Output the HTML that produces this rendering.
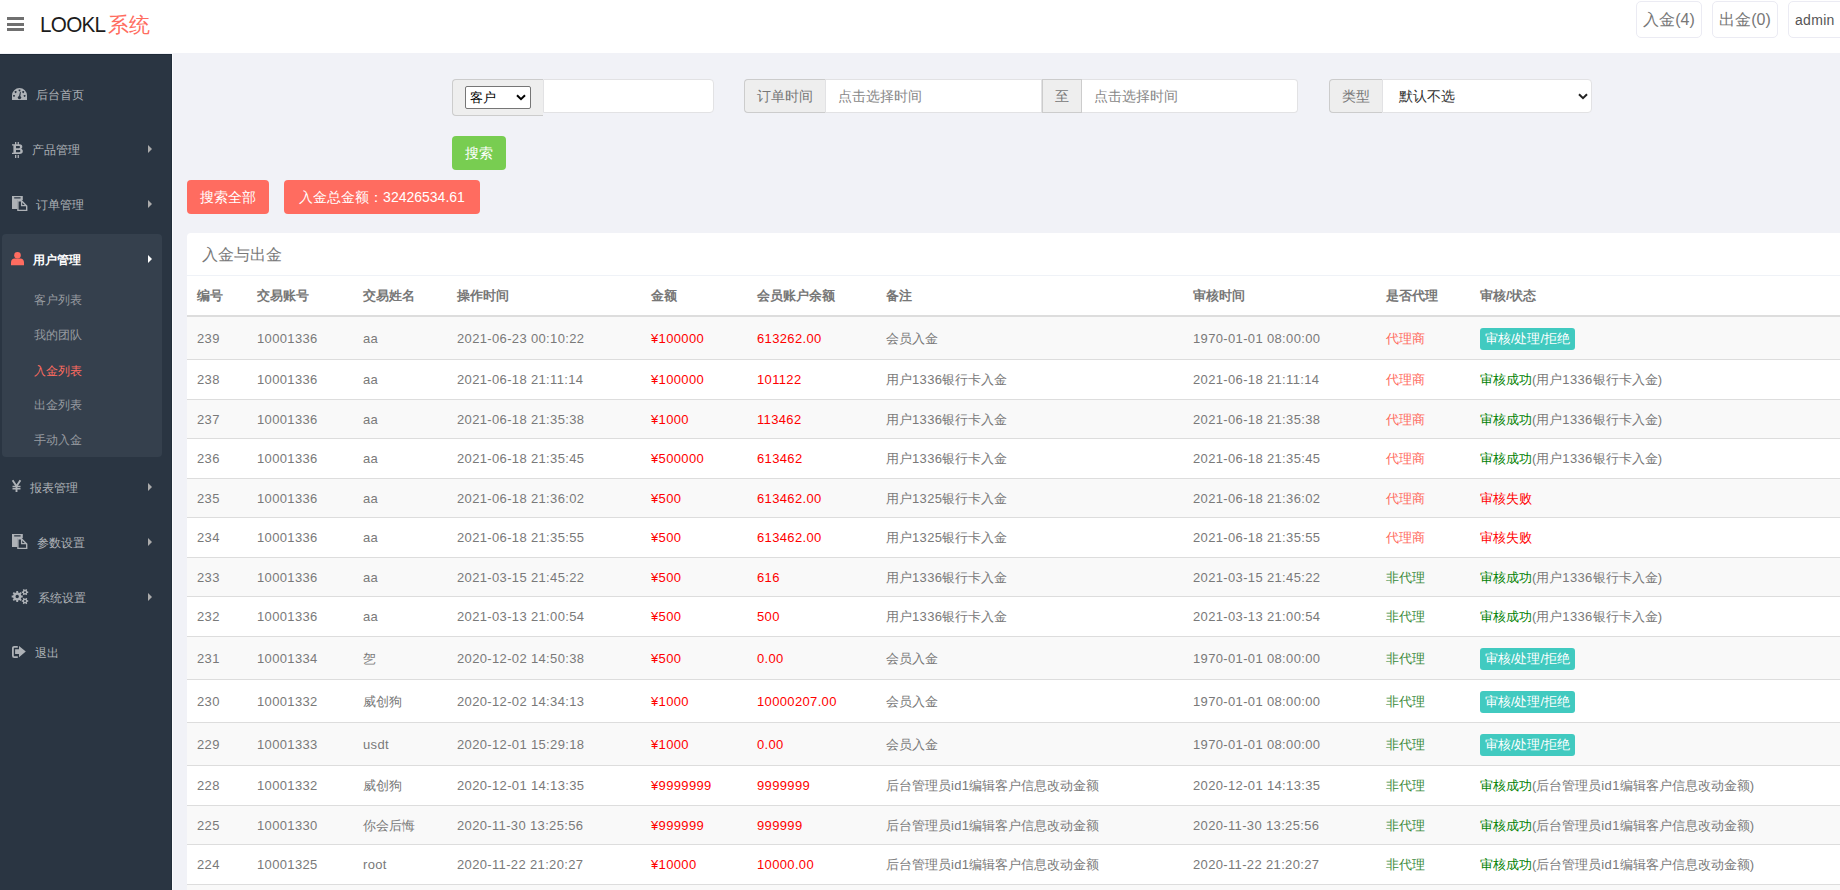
<!DOCTYPE html>
<html><head><meta charset="utf-8"><title>LOOKL</title>
<style>
*{box-sizing:border-box}
html,body{margin:0;padding:0}
body{width:1840px;height:890px;overflow:hidden;position:relative;background:#f1f2f7;font-family:"Liberation Sans",sans-serif;color:#797979;font-size:13px}
.hdr{position:absolute;left:0;top:0;width:1840px;height:53px;background:#fff}
.burger{position:absolute;left:7px;top:17px;width:17px;height:14px}
.burger i{position:absolute;left:0;width:17px;height:3px;background:#707070}
.logo{position:absolute;left:40px;top:9.5px;font-size:22.5px;line-height:30px;color:#1c1c1c;white-space:nowrap}
.logo span{color:#ff6c60;letter-spacing:0;font-size:21px;white-space:nowrap}
.hbox{position:absolute;top:1px;height:37px;border:1px solid #ebebf3;border-radius:5px;background:#fff;color:#777;font-size:16px;line-height:35px;text-align:center}
.side{position:absolute;left:0;top:54px;width:172px;height:836px;background:#2a3542;border-top:1px solid #1f2a37;border-right:1px solid #222d3a}
.sline{position:absolute;left:172px;top:53px;width:1px;height:837px;background:#fafbfd}
.mi{position:absolute;left:0;width:172px;height:20px;color:#aeb2b7;font-size:12px;line-height:20px}
.mi .ic{position:absolute;top:3px}
.mi .tx{position:absolute;top:0}
.mi .car{position:absolute;left:148px;top:5px;width:0;height:0;border-top:4px solid transparent;border-bottom:4px solid transparent;border-left:4px solid #ababab}
.subblk{position:absolute;left:2px;top:234px;width:160px;height:223px;background:#35404d;border-radius:4px}
.si{position:absolute;left:34px;font-size:12px;line-height:20px;color:#979ba0}

.ig{position:absolute;top:79px;height:34px}
.addon{position:absolute;top:0;height:34px;background:#eee;border:1px solid #ccc;color:#777;font-size:14px;line-height:32px;text-align:center}
.inp{position:absolute;top:0;height:34px;background:#fff;border:1px solid #e2e2e4;border-radius:0 4px 4px 0;color:#888;font-size:14px;line-height:32px;padding-left:12px}
.btn{position:absolute;height:34px;border-radius:4px;color:#fff;font-size:14px;line-height:34px;text-align:center}
.panel{position:absolute;left:187px;top:233px;width:1660px;height:700px;background:#fff;border-radius:4px}
.ph{position:absolute;left:0;top:0;width:100%;height:43px;border-bottom:1px solid #eff2f7}
.ph span{position:absolute;left:15px;top:11px;font-size:16px;line-height:22px;color:#797979}
table.t{position:absolute;left:0;top:43px;border-collapse:separate;border-spacing:0;table-layout:fixed;width:1660px;font-size:13px;color:#797979}
.t i{font-style:normal;letter-spacing:.35px}
.t th{height:41px;text-align:left;font-weight:bold;font-size:13px;letter-spacing:0;padding:0 0 0 10px;border-bottom:2px solid #ddd;vertical-align:middle;color:#777}
.t td{padding:1px 0 0 10px;border-top:1px solid #ddd;vertical-align:middle;white-space:nowrap;line-height:18px}
.t tr.o td{background:#f9f9f9}
.t tr:nth-child(1) td{border-top:0}
.r{color:#f00}
.dl{color:#ff6c60}
.fd{color:#3a8a3a}
.ok{color:#008000}
.bad{color:#f00}
.bdg{display:inline-block;width:95px;height:22px;background:#41cac0;border-radius:3px;color:#fff;font-size:13px;line-height:22px;text-align:center}
</style></head><body>
<div class="hdr">
  <div class="burger"><i style="top:0"></i><i style="top:5.5px"></i><i style="top:11px"></i></div>
  <div class="logo"><b style="font-weight:normal;display:inline-block;transform:scaleX(0.92);transform-origin:0 0;letter-spacing:-0.8px">LOOKL</b><span style="position:absolute;left:68px;top:0">系统</span></div>
  <div class="hbox" style="left:1636px;width:66px">入金(4)</div>
  <div class="hbox" style="left:1712px;width:66px">出金(0)</div>
  <div class="hbox" style="left:1788px;width:60px;font-size:14px;line-height:37px;letter-spacing:.3px;text-align:left;padding-left:6px;color:#555">admin</div>
</div>
<div class="side"></div>
<div class="sline"></div>
<div class="subblk"></div>

<div class="mi" style="top:85px"><span class="tx" style="left:36px">后台首页</span></div>
<div class="mi" style="top:140px"><span class="tx" style="left:32px">产品管理</span><i class="car"></i></div>
<div class="mi" style="top:195px"><span class="tx" style="left:36px">订单管理</span><i class="car"></i></div>
<div class="mi" style="top:250px;color:#fff"><span class="tx" style="left:33px;font-weight:bold">用户管理</span><i class="car" style="border-left-color:#fff"></i></div>

<svg style="position:absolute;left:10px;top:86px" width="20" height="16" viewBox="0 0 20 16"><g transform="translate(2,2)"><path fill-rule="evenodd" fill="#aeb2b7" d="M0 12V7.5A7.5 7.5 0 0 1 15 7.5V12Z M7.5 1.4a0.95 0.95 0 1 0 0.01 0Z M3.6 3a0.95 0.95 0 1 0 0.01 0Z M11.2 3a0.95 0.95 0 1 0 0.01 0Z M2 6.9a0.95 0.95 0 1 0 0.01 0Z M12.6 6.9a0.95 0.95 0 1 0 0.01 0Z"/><path fill="#2a3542" d="M8.1 3.6L8.9 4L8.2 9L6.8 9Z"/><circle cx="7.5" cy="9.6" r="1.7" fill="#2a3542"/></g></svg>
<svg style="position:absolute;left:10px;top:140px" width="16" height="18" viewBox="0 0 16 18"><g fill="#aeb2b7"><rect x="5" y="2" width="1.3" height="3"/><rect x="7.6" y="2" width="1.3" height="3"/><rect x="5" y="15" width="1.3" height="3"/><rect x="7.6" y="15" width="1.3" height="3"/><path fill-rule="evenodd" d="M2 4.2H9.5C11.6 4.2 12.3 5.4 12.3 6.7C12.3 7.8 11.8 8.4 11 8.8C12.2 9.1 12.8 10 12.8 11.3C12.8 13 11.7 14 9.6 14H2V12.7H3.4V5.5H2Z M6 6V8.2H9C9.7 8.2 10 7.8 10 7.1C10 6.4 9.7 6 9 6Z M6 10V12.2H9.3C10.1 12.2 10.4 11.8 10.4 11.1C10.4 10.4 10.1 10 9.3 10Z"/></g></svg>
<svg style="position:absolute;left:10px;top:194px" width="20" height="20" viewBox="0 0 20 20"><g transform="translate(2,2)"><path fill-rule="evenodd" fill="#aeb2b7" d="M0 0H10.8V4H5.5V12.9H0Z M2.2 1.2H8.6V2.6H2.2Z"/><path fill="none" stroke="#aeb2b7" stroke-width="1.4" d="M5.9 4.7H9.4L14.7 10V14.4H5.9Z"/><path fill="none" stroke="#aeb2b7" stroke-width="1.3" d="M9.6 4.5V9.6H14.8"/></g></svg>
<svg style="position:absolute;left:10px;top:250px" width="16" height="16" viewBox="0 0 16 16"><g fill="#ff6c60" transform="translate(1,2)"><circle cx="6.5" cy="3.3" r="3.3"/><path d="M0 13.2V10.6C0 8.2 1.6 6.6 3.6 6.6H9.4C11.4 6.6 13 8.2 13 10.6V13.2Z"/></g></svg>
<svg style="position:absolute;left:10px;top:478px" width="14" height="16" viewBox="0 0 14 16"><g fill="none" stroke="#aeb2b7" stroke-width="1.9"><path d="M2.6 2.2L6.5 8.2L10.4 2.2"/><path d="M6.5 8V14"/><path d="M2.5 8.4H10.5M2.5 10.8H10.5" stroke-width="1.5"/></g></svg>
<svg style="position:absolute;left:10px;top:532px" width="20" height="20" viewBox="0 0 20 20"><g transform="translate(2,2)"><path fill-rule="evenodd" fill="#aeb2b7" d="M0 0H10.8V4H5.5V12.9H0Z M2.2 1.2H8.6V2.6H2.2Z"/><path fill="none" stroke="#aeb2b7" stroke-width="1.4" d="M5.9 4.7H9.4L14.7 10V14.4H5.9Z"/><path fill="none" stroke="#aeb2b7" stroke-width="1.3" d="M9.6 4.5V9.6H14.8"/></g></svg>
<svg style="position:absolute;left:10px;top:588px" width="20" height="18" viewBox="0 0 20 18"><path fill-rule="evenodd" fill="#aeb2b7" d="M11.29 7.54 L12.72 7.57 L12.72 9.43 L11.29 9.46 L10.77 10.71 L11.76 11.75 L10.45 13.06 L9.41 12.07 L8.16 12.59 L8.13 14.02 L6.27 14.02 L6.24 12.59 L4.99 12.07 L3.95 13.06 L2.64 11.75 L3.63 10.71 L3.11 9.46 L1.68 9.43 L1.68 7.57 L3.11 7.54 L3.63 6.29 L2.64 5.25 L3.95 3.94 L4.99 4.93 L6.24 4.41 L6.27 2.98 L8.13 2.98 L8.16 4.41 L9.41 4.93 L10.45 3.94 L11.76 5.25 L10.77 6.29ZM5.50 8.50a1.70 1.70 0 1 0 3.40 0a1.70 1.70 0 1 0 -3.40 0ZM17.29 3.47 L18.22 3.47 L18.22 4.93 L17.29 4.93 L16.78 5.82 L17.24 6.62 L15.98 7.35 L15.51 6.54 L14.49 6.54 L14.02 7.35 L12.76 6.62 L13.22 5.82 L12.71 4.93 L11.78 4.93 L11.78 3.47 L12.71 3.47 L13.22 2.58 L12.76 1.78 L14.02 1.05 L14.49 1.86 L15.51 1.86 L15.98 1.05 L17.24 1.78 L16.78 2.58ZM14.00 4.20a1.00 1.00 0 1 0 2.00 0a1.00 1.00 0 1 0 -2.00 0ZM17.29 12.27 L18.22 12.27 L18.22 13.73 L17.29 13.73 L16.78 14.62 L17.24 15.42 L15.98 16.15 L15.51 15.34 L14.49 15.34 L14.02 16.15 L12.76 15.42 L13.22 14.62 L12.71 13.73 L11.78 13.73 L11.78 12.27 L12.71 12.27 L13.22 11.38 L12.76 10.58 L14.02 9.85 L14.49 10.66 L15.51 10.66 L15.98 9.85 L17.24 10.58 L16.78 11.38ZM14.00 13.00a1.00 1.00 0 1 0 2.00 0a1.00 1.00 0 1 0 -2.00 0Z"/></svg>
<svg style="position:absolute;left:10px;top:644px" width="18" height="15" viewBox="0 0 18 15"><g transform="translate(2,2)"><path fill="none" stroke="#aeb2b7" stroke-width="1.8" d="M5.8 0.9H2.2C1.4 0.9 0.9 1.4 0.9 2.2V9.8C0.9 10.6 1.4 11.1 2.2 11.1H5.8"/><path fill="#aeb2b7" d="M3.1 3.3H7V0L13.8 5.6L7 11.2V7.9H3.1Z"/></g></svg>
<div class="si" style="top:290px">客户列表</div>
<div class="si" style="top:325px">我的团队</div>
<div class="si" style="top:360.5px;color:#ff6c60">入金列表</div>
<div class="si" style="top:395px">出金列表</div>
<div class="si" style="top:430px">手动入金</div>
<div class="mi" style="top:478px"><span class="tx" style="left:30px">报表管理</span><i class="car"></i></div>
<div class="mi" style="top:533px"><span class="tx" style="left:37px">参数设置</span><i class="car"></i></div>
<div class="mi" style="top:588px"><span class="tx" style="left:38px">系统设置</span><i class="car"></i></div>
<div class="mi" style="top:643px"><span class="tx" style="left:35px">退出</span></div>

<div class="ig" style="left:452px;width:262px">
  <div class="addon" style="left:0;width:91px;height:37px;border-radius:4px 0 0 4px;border-right:0"></div>
  <div style="position:absolute;left:13px;top:7px;width:66px;height:23px;border:1px solid #767676;border-radius:2px;background:#fff;color:#000;font-size:13px;line-height:21px;padding-left:4px">客户<svg style="position:absolute;left:50px;top:7px" width="10" height="7" viewBox="0 0 10 7"><path d="M1 1.2L5 5.2L9 1.2" fill="none" stroke="#000" stroke-width="2"/></svg></div>
  <div class="inp" style="left:91px;width:171px"></div>
</div>
<div class="ig" style="left:744px;width:554px">
  <div class="addon" style="left:0;width:81px;border-radius:4px 0 0 4px;border-right:0">订单时间</div>
  <div class="inp" style="left:81px;width:217px;border-radius:0">点击选择时间</div>
  <div class="addon" style="left:298px;width:40px">至</div>
  <div class="inp" style="left:338px;width:216px;border-left:0">点击选择时间</div>
</div>
<div class="ig" style="left:1329px;width:263px">
  <div class="addon" style="left:0;width:53px;border-radius:4px 0 0 4px;border-right:0">类型</div>
  <div class="inp" style="left:53px;width:210px;color:#333;padding-left:16px">默认不选<svg style="position:absolute;left:195px;top:13px" width="10" height="7" viewBox="0 0 10 7"><path d="M1 1.2L5 5.2L9 1.2" fill="none" stroke="#222" stroke-width="2"/></svg></div>
</div>
<div class="btn" style="left:452px;top:136px;width:54px;background:#78cd51">搜索</div>
<div class="btn" style="left:187px;top:180px;width:82px;background:#ff6c60">搜索全部</div>
<div class="btn" style="left:284px;top:180px;width:196px;background:#ff6c60">入金总金额：32426534.61</div>
<div class="panel">
  <div class="ph"><span>入金与出金</span></div>
  <table class="t">
    <colgroup><col style="width:60px"><col style="width:106px"><col style="width:94px"><col style="width:194px"><col style="width:106px"><col style="width:129px"><col style="width:307px"><col style="width:193px"><col style="width:94px"><col></colgroup>
    <thead><tr><th>编号</th><th>交易账号</th><th>交易姓名</th><th>操作时间</th><th>金额</th><th>会员账户余额</th><th>备注</th><th>审核时间</th><th>是否代理</th><th>审核/状态</th></tr></thead>
    <tbody>
<tr class="o" style="height:42px"><td><i>239</i></td><td><i>10001336</i></td><td><i>aa</i></td><td><i>2021-06-23 00:10:22</i></td><td class="r"><i>¥100000</i></td><td class="r"><i>613262.00</i></td><td>会员入金</td><td><i>1970-01-01 08:00:00</i></td><td><span class="dl">代理商</span></td><td><span class="bdg">审核/处理/拒绝</span></td></tr>
<tr style="height:40px"><td><i>238</i></td><td><i>10001336</i></td><td><i>aa</i></td><td><i>2021-06-18 21:11:14</i></td><td class="r"><i>¥100000</i></td><td class="r"><i>101122</i></td><td>用户<i>1336</i>银行卡入金</td><td><i>2021-06-18 21:11:14</i></td><td><span class="dl">代理商</span></td><td><span class="ok">审核成功</span>(用户<i>1336</i>银行卡入金)</td></tr>
<tr class="o" style="height:39px"><td><i>237</i></td><td><i>10001336</i></td><td><i>aa</i></td><td><i>2021-06-18 21:35:38</i></td><td class="r"><i>¥1000</i></td><td class="r"><i>113462</i></td><td>用户<i>1336</i>银行卡入金</td><td><i>2021-06-18 21:35:38</i></td><td><span class="dl">代理商</span></td><td><span class="ok">审核成功</span>(用户<i>1336</i>银行卡入金)</td></tr>
<tr style="height:40px"><td><i>236</i></td><td><i>10001336</i></td><td><i>aa</i></td><td><i>2021-06-18 21:35:45</i></td><td class="r"><i>¥500000</i></td><td class="r"><i>613462</i></td><td>用户<i>1336</i>银行卡入金</td><td><i>2021-06-18 21:35:45</i></td><td><span class="dl">代理商</span></td><td><span class="ok">审核成功</span>(用户<i>1336</i>银行卡入金)</td></tr>
<tr class="o" style="height:39px"><td><i>235</i></td><td><i>10001336</i></td><td><i>aa</i></td><td><i>2021-06-18 21:36:02</i></td><td class="r"><i>¥500</i></td><td class="r"><i>613462.00</i></td><td>用户<i>1325</i>银行卡入金</td><td><i>2021-06-18 21:36:02</i></td><td><span class="dl">代理商</span></td><td><span class="bad">审核失败</span></td></tr>
<tr style="height:40px"><td><i>234</i></td><td><i>10001336</i></td><td><i>aa</i></td><td><i>2021-06-18 21:35:55</i></td><td class="r"><i>¥500</i></td><td class="r"><i>613462.00</i></td><td>用户<i>1325</i>银行卡入金</td><td><i>2021-06-18 21:35:55</i></td><td><span class="dl">代理商</span></td><td><span class="bad">审核失败</span></td></tr>
<tr class="o" style="height:39px"><td><i>233</i></td><td><i>10001336</i></td><td><i>aa</i></td><td><i>2021-03-15 21:45:22</i></td><td class="r"><i>¥500</i></td><td class="r"><i>616</i></td><td>用户<i>1336</i>银行卡入金</td><td><i>2021-03-15 21:45:22</i></td><td><span class="fd">非代理</span></td><td><span class="ok">审核成功</span>(用户<i>1336</i>银行卡入金)</td></tr>
<tr style="height:40px"><td><i>232</i></td><td><i>10001336</i></td><td><i>aa</i></td><td><i>2021-03-13 21:00:54</i></td><td class="r"><i>¥500</i></td><td class="r"><i>500</i></td><td>用户<i>1336</i>银行卡入金</td><td><i>2021-03-13 21:00:54</i></td><td><span class="fd">非代理</span></td><td><span class="ok">审核成功</span>(用户<i>1336</i>银行卡入金)</td></tr>
<tr class="o" style="height:43px"><td><i>231</i></td><td><i>10001334</i></td><td>乫</td><td><i>2020-12-02 14:50:38</i></td><td class="r"><i>¥500</i></td><td class="r"><i>0.00</i></td><td>会员入金</td><td><i>1970-01-01 08:00:00</i></td><td><span class="fd">非代理</span></td><td><span class="bdg">审核/处理/拒绝</span></td></tr>
<tr style="height:43px"><td><i>230</i></td><td><i>10001332</i></td><td>威创狗</td><td><i>2020-12-02 14:34:13</i></td><td class="r"><i>¥1000</i></td><td class="r"><i>10000207.00</i></td><td>会员入金</td><td><i>1970-01-01 08:00:00</i></td><td><span class="fd">非代理</span></td><td><span class="bdg">审核/处理/拒绝</span></td></tr>
<tr class="o" style="height:43px"><td><i>229</i></td><td><i>10001333</i></td><td><i>usdt</i></td><td><i>2020-12-01 15:29:18</i></td><td class="r"><i>¥1000</i></td><td class="r"><i>0.00</i></td><td>会员入金</td><td><i>1970-01-01 08:00:00</i></td><td><span class="fd">非代理</span></td><td><span class="bdg">审核/处理/拒绝</span></td></tr>
<tr style="height:40px"><td><i>228</i></td><td><i>10001332</i></td><td>威创狗</td><td><i>2020-12-01 14:13:35</i></td><td class="r"><i>¥9999999</i></td><td class="r"><i>9999999</i></td><td>后台管理员<i>id1</i>编辑客户信息改动金额</td><td><i>2020-12-01 14:13:35</i></td><td><span class="fd">非代理</span></td><td><span class="ok">审核成功</span>(后台管理员<i>id1</i>编辑客户信息改动金额)</td></tr>
<tr class="o" style="height:39px"><td><i>225</i></td><td><i>10001330</i></td><td>你会后悔</td><td><i>2020-11-30 13:25:56</i></td><td class="r"><i>¥999999</i></td><td class="r"><i>999999</i></td><td>后台管理员<i>id1</i>编辑客户信息改动金额</td><td><i>2020-11-30 13:25:56</i></td><td><span class="fd">非代理</span></td><td><span class="ok">审核成功</span>(后台管理员<i>id1</i>编辑客户信息改动金额)</td></tr>
<tr style="height:40px"><td><i>224</i></td><td><i>10001325</i></td><td><i>root</i></td><td><i>2020-11-22 21:20:27</i></td><td class="r"><i>¥10000</i></td><td class="r"><i>10000.00</i></td><td>后台管理员<i>id1</i>编辑客户信息改动金额</td><td><i>2020-11-22 21:20:27</i></td><td><span class="fd">非代理</span></td><td><span class="ok">审核成功</span>(后台管理员<i>id1</i>编辑客户信息改动金额)</td></tr>
<tr class="o" style="height:40px"><td><i>223</i></td><td><i>10001325</i></td><td><i>root</i></td><td><i>2020-11-22 21:20:27</i></td><td class="r"><i>¥10000</i></td><td class="r"><i>10000.00</i></td><td>后台管理员<i>id1</i>编辑客户信息改动金额</td><td><i>2020-11-22 21:20:27</i></td><td><span class="fd">非代理</span></td><td><span class="ok">审核成功</span>(后台管理员<i>id1</i>编辑客户信息改动金额)</td></tr>
    </tbody>
  </table>
</div>
</body></html>
